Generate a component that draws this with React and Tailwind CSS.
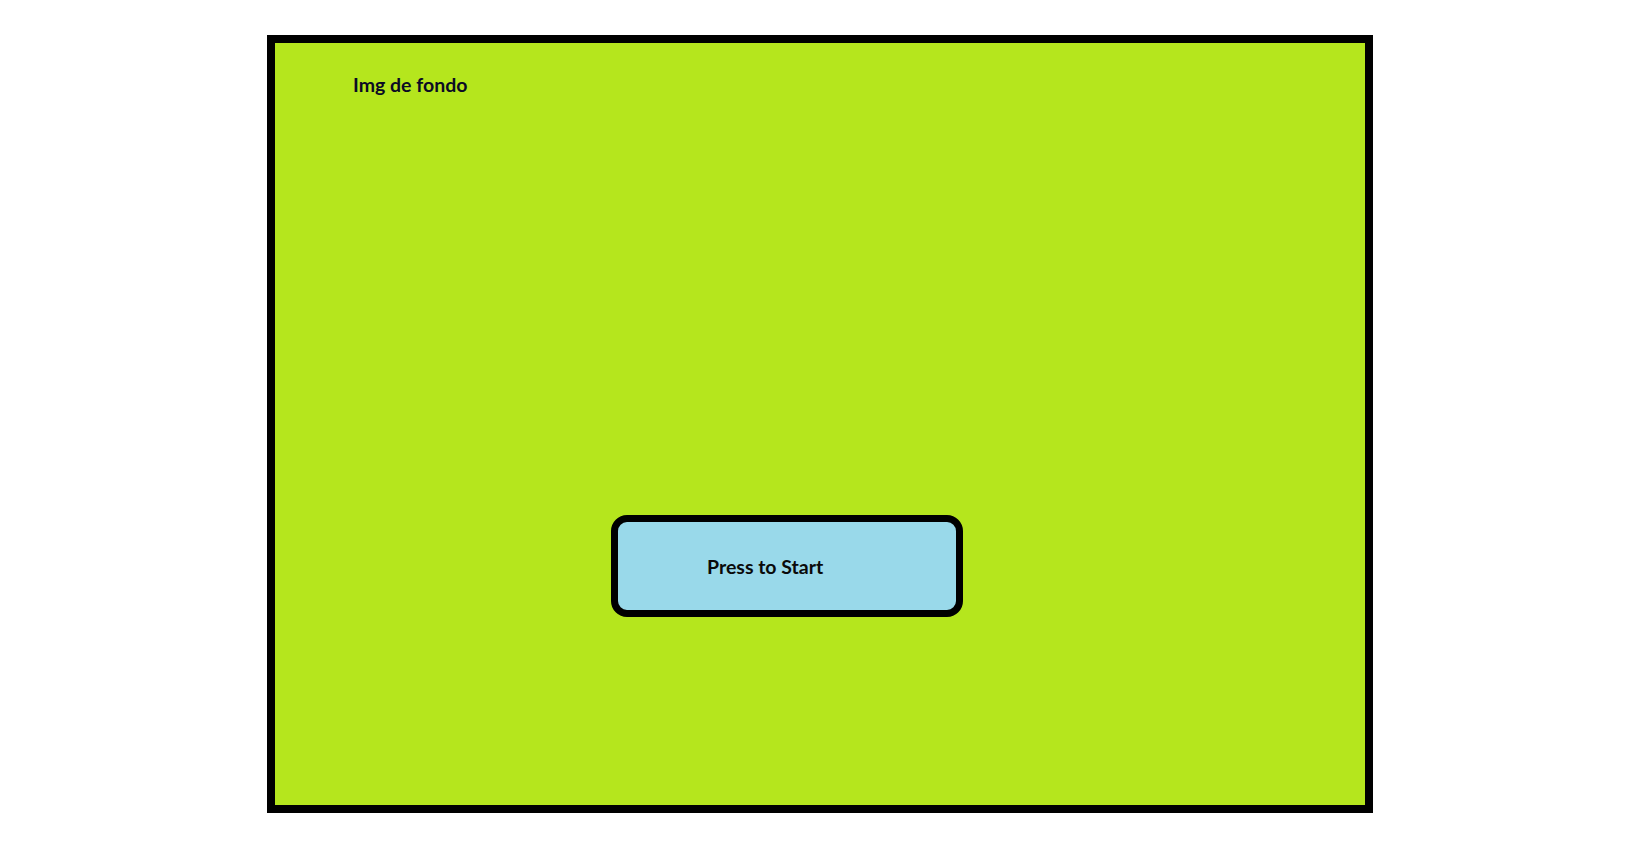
import React from 'react'

export default function App() {
  return (
    <div className="w-[1636px] h-[849px] bg-white pt-[35px]" style={{ fontFamily: 'Lato, "Open Sans", sans-serif' }}>
      <div className="ml-[267px] w-[1106px] h-[778px] border-[8px] border-black bg-[#b5e61d] flex flex-col">
        <div className="ml-[78px] mt-[30px] text-[19.5px] leading-[24px] font-bold text-[#0b0b24]">
          Img de fondo
        </div>
        <button className="ml-[336px] mt-[418px] w-[352px] h-[102px] border-[7px] border-black rounded-[16px] bg-[#99d9ea] flex items-center pl-[89px] pt-[2px] text-[19.5px] leading-[24px] font-bold text-[#0a0a0a]">
          Press to Start
        </button>
      </div>
    </div>
  )
}
